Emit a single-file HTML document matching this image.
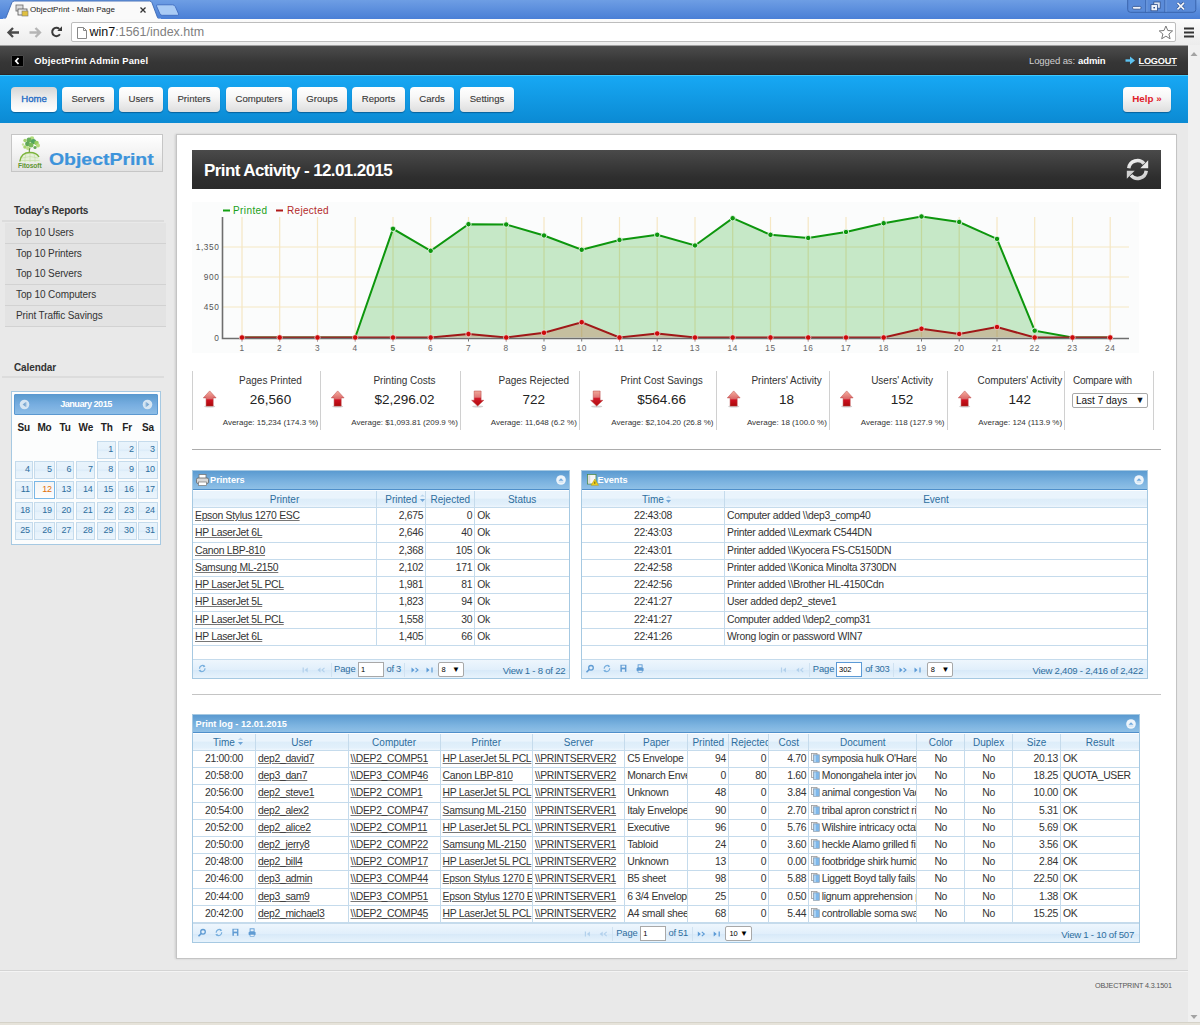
<!DOCTYPE html><html><head><meta charset="utf-8"><title>ObjectPrint - Main Page</title><style>
*{box-sizing:border-box;margin:0;padding:0}
html,body{width:1200px;height:1025px;overflow:hidden;background:#e9e9e9;font-family:"Liberation Sans",sans-serif;font-size:10px;color:#222}
.a{position:absolute;white-space:nowrap}
#tabbar{position:absolute;left:0;top:0;width:1200px;height:19px;background:linear-gradient(#6e9ee4,#4a7fd6)}
#toolbar{position:absolute;left:0;top:19px;width:1200px;height:27px;background:linear-gradient(#fbfbfb,#ececec);border-bottom:1px solid #a0a0a0}
#omni{position:absolute;left:71px;top:22px;width:1105px;height:20px;background:#fff;border:1px solid #bdbdbd;border-radius:2px}
#adminbar{position:absolute;left:0;top:46px;width:1188px;height:29px;background:linear-gradient(#4c4c4c,#363636 55%,#313131 95%,#2a1e1e)}
#navbar{position:absolute;left:0;top:75px;width:1188px;height:48px;background:linear-gradient(#17a8f4,#0b8ad3);border-top:1px solid #3ccaff}
.nb{position:absolute;top:11px;height:24.5px;border-radius:4px;background:linear-gradient(#ffffff 0%,#f7f7f7 40%,#dedede 100%);box-shadow:0 1px 1px rgba(0,40,80,.45);color:#444;font-size:9.6px;text-align:center;line-height:24.5px}
#scroll{position:absolute;left:1188px;top:45px;width:12px;height:977px;background:#f0f0f0}
#bottomstrip{position:absolute;left:0;top:1022px;width:1200px;height:3px;background:#e6e3da;border-top:1px solid #d5d2c8}
.side-h{position:absolute;left:14px;font-weight:bold;font-size:10px;color:#333}
.side-line{position:absolute;left:2px;width:162px;height:2px;background:#dcdcdc}
.mi{position:absolute;left:5px;width:161px;height:21px;background:#e3e3e3;border-bottom:1px solid #d2d2d2;padding-left:11px;line-height:20px;font-size:10px;color:#333;letter-spacing:-0.1px}
#main{position:absolute;left:176px;top:134px;width:1001px;height:825px;background:#fff;border:1px solid #c4c4c4;box-shadow:-1px 0 2px rgba(0,0,0,.12)}
#ttl{position:absolute;left:192px;top:150px;width:969px;height:39px;background:linear-gradient(#4a4a4a,#2e2e2e 70%,#2a2a2a)}
.st-sep{position:absolute;top:371px;width:1px;height:59px;background:#d0d0d0}
.st-t{position:absolute;top:375.3px;font-size:10px;color:#333;text-align:center}
.st-v{position:absolute;top:392.3px;font-size:13.5px;color:#222;text-align:center}
.st-avg{position:absolute;top:417.5px;font-size:8px;color:#333;text-align:center}
.hr{position:absolute;left:192px;width:969px;height:1px;background:#c4c4c4}
.pnl{position:absolute;border:1px solid #a6c9e2;background:#fff;overflow:hidden}
.pt{position:absolute;left:0;top:0;right:0;height:19px;background:linear-gradient(#5a9ad0,#7cb3e0 60%,#8fc0e6);border-bottom:1px solid #4f8fca;color:#fff;font-weight:bold;font-size:9.2px;line-height:19px}
.ph{position:absolute;left:0;right:0;height:18px;background:linear-gradient(#eaf4fc,#eaf4fc 45%,#ddedf9 50%,#e2f0fb 85%,#eef6fd);border-bottom:1px solid #c5dbec;border-top:1px solid #fdfeff}
.hc{position:absolute;top:0;height:17px;line-height:18px;text-align:center;color:#2e6e9e;font-size:10px;border-right:1px solid #c5dbec;overflow:hidden;white-space:nowrap}
.rw{position:absolute;left:0;right:0;border-bottom:1px solid #c5dbec}
.c{position:absolute;top:0;bottom:0;padding:0 2px;font-size:10.4px;letter-spacing:-0.3px;color:#333;border-right:1px solid #c5dbec;overflow:hidden;white-space:nowrap}
.u{text-decoration:underline;text-decoration-color:#777;text-underline-offset:0.8px}
.pg{position:absolute;left:0;right:0;background:linear-gradient(#eef6fd,#e1effb 50%,#d7e9f8 52%,#e9f4fd);border-top:1px solid #c5dbec;color:#2e6e9e;font-size:10px}
.cal-c{position:absolute;height:18px;border:1px solid #c5dbec;background:linear-gradient(#e9f4fc,#e5f1fb 45%,#d9eaf8 50%,#e6f2fb 60%,#eaf4fc);color:#2e6e9e;font-size:9px;text-align:right;padding-right:1.8px;line-height:14.6px;letter-spacing:-0.2px}
</style></head><body>
<div id="tabbar"></div>
<div id="toolbar"></div>
<svg class="a" style="left:0;top:0" width="200" height="22">
<path d="M4 19.5 Q5.5 19 6 17.5 L11.8 2.8 Q12.5 1 14.5 1 L149.5 1 Q151.3 1 152 2.8 L157.5 17.5 Q158 19 160 19.5 Z" fill="#fafafa" stroke="#3b68b3" stroke-width="0.9"/>
<rect x="3" y="18.6" width="158" height="3" fill="#f9f9f9"/>
<path d="M157.5 4.8 L172.5 4.8 Q174.5 4.8 175.3 6.6 L178.6 14 Q179 15.3 177.5 15.3 L162.3 15.3 Q160.6 15.3 160 14 L156.6 6.2 Q156.2 4.8 157.5 4.8Z" fill="#a9cbf5" stroke="#3866bb" stroke-width="0.8"/>
</svg>
<div id="omni"></div>
<svg class="a" style="left:15px;top:4px" width="14" height="13"><rect x="1" y="1" width="7" height="6" fill="#ddd" stroke="#666" stroke-width="0.8"/><rect x="3" y="5" width="9" height="6" fill="#eee" stroke="#555" stroke-width="0.8"/><rect x="7" y="7" width="6" height="5" fill="#e0c040" stroke="#777" stroke-width="0.6"/></svg>
<div class="a" style="left:30px;top:5.2px;font-size:8px;color:#222">ObjectPrint - Main Page</div>
<svg class="a" style="left:139px;top:6px" width="8" height="8"><path d="M1.5 1.5L6.5 6.5M6.5 1.5L1.5 6.5" stroke="#333" stroke-width="1.3"/></svg>
<svg class="a" style="left:5px;top:24px" width="66" height="18"><path d="M3.5 8.5 H14 M8 4 L3.5 8.5 L8 13" fill="none" stroke="#4a4a4a" stroke-width="2.3"/><path d="M24.5 8.5 H35 M30.5 4 L35 8.5 L30.5 13" fill="none" stroke="#b5b5b5" stroke-width="2.3"/><path d="M54.3 4.9 A4.2 4.2 0 1 0 54.9 10.3" fill="none" stroke="#3a3a3a" stroke-width="2"/><path d="M52.3 7 L57 7 L57 2.3 Z" fill="#3a3a3a"/></svg>
<svg class="a" style="left:75.5px;top:25.5px" width="12" height="14"><path d="M1.5 1.5 H7.5 L10.5 4.5 V12.5 H1.5 Z" fill="#fff" stroke="#888" stroke-width="1"/><path d="M7.5 1.5 V4.5 H10.5" fill="none" stroke="#888"/></svg>
<div class="a" style="left:89.5px;top:25.4px;font-size:12.5px;color:#111">win7<span style="color:#808080">:1561/index.htm</span></div>
<svg class="a" style="left:1158px;top:24.5px" width="16" height="15"><path d="M7.9 1 L9.8 5.5 L14.6 5.9 L10.9 9 L12.1 13.8 L7.9 11.2 L3.7 13.8 L4.9 9 L1.2 5.9 L6 5.5 Z" fill="#fff" stroke="#7a7a7a" stroke-width="1"/></svg>
<svg class="a" style="left:1183px;top:26px" width="12" height="13"><rect x="1" y="1.5" width="10" height="2" fill="#333"/><rect x="1" y="5.5" width="10" height="2" fill="#333"/><rect x="1" y="9.5" width="10" height="2" fill="#333"/></svg>
<svg class="a" style="left:1127px;top:0" width="73" height="14">
<path d="M0.7 0 V9.5 Q0.7 12.3 3.5 12.3 H66 Q68.8 12.3 68.8 9.5 V0" fill="#5a8bd9" stroke="#3660a8" stroke-width="0.9"/>
<path d="M18.8 0 V12.3 M37.9 0 V12.3" stroke="#3660a8" stroke-width="0.9"/>
<path d="M19.8 0 V12 M38.9 0 V12" stroke="#86aee8" stroke-width="0.6"/>
<rect x="5.5" y="6.4" width="8.6" height="2.8" rx="1.3" fill="#eef2fa" stroke="#2d4f8c" stroke-width="0.8"/>
<rect x="26.8" y="2" width="6.4" height="6.2" fill="#dfe6f3" stroke="#2d4f8c" stroke-width="0.8"/>
<rect x="24" y="4.6" width="6.4" height="6.2" fill="#eef2fa" stroke="#2d4f8c" stroke-width="0.8"/><rect x="26.4" y="7" width="1.6" height="1.4" fill="#2d4f8c"/>
<path d="M50.5 2.8 L57 9.4 M57 2.8 L50.5 9.4" stroke="#2d4f8c" stroke-width="3"/>
<path d="M50.5 2.8 L57 9.4 M57 2.8 L50.5 9.4" stroke="#f4f6fb" stroke-width="1.7"/>
</svg>
<div id="adminbar"></div>
<div class="a" style="left:11px;top:55px;width:13px;height:12px;background:#000;border:1px solid #4a4a4a;border-radius:1px"></div>
<svg class="a" style="left:11px;top:55px" width="13" height="12"><path d="M7.5 3 L4.8 6 L7.5 9" fill="none" stroke="#fff" stroke-width="1.8"/></svg>
<div class="a" style="left:34.3px;top:55.3px;color:#fff;font-weight:bold;font-size:9.4px;letter-spacing:0.19px">ObjectPrint Admin Panel</div>
<div class="a" style="left:1029px;top:55.2px;color:#d0d0d0;font-size:9.5px;letter-spacing:-0.1px">Logged as:<b style="color:#fff;letter-spacing:-0.1px;margin-left:3px">admin</b></div>
<svg class="a" style="left:1125px;top:56px" width="11" height="9"><path d="M0.5 4.5 H6.5" stroke="#5cc3f2" stroke-width="2.4"/><path d="M5 0.5 L10 4.5 L5 8.5Z" fill="#5cc3f2"/></svg>
<div class="a" style="left:1138.5px;top:55.8px;color:#fff;font-size:9.2px;font-weight:bold;letter-spacing:-0.2px">LOGOUT</div><div class="a" style="left:1139px;top:64.5px;width:38px;height:1.5px;background:#aaa"></div>
<div id="navbar">
<div class="nb" style="left:11px;width:46px;color:#1a68c4;background:linear-gradient(#d6d6d6,#f2f2f2 55%,#ffffff);font-size:9.6px;-webkit-text-stroke:0.3px #1a68c4;">Home</div>
<div class="nb" style="left:62px;width:52px;color:#383838;-webkit-text-stroke:0.1px #383838;">Servers</div>
<div class="nb" style="left:119px;width:44px;color:#383838;-webkit-text-stroke:0.1px #383838;">Users</div>
<div class="nb" style="left:168px;width:52px;color:#383838;-webkit-text-stroke:0.1px #383838;">Printers</div>
<div class="nb" style="left:226px;width:66px;color:#383838;-webkit-text-stroke:0.1px #383838;">Computers</div>
<div class="nb" style="left:297px;width:50px;color:#383838;-webkit-text-stroke:0.1px #383838;">Groups</div>
<div class="nb" style="left:352px;width:53px;color:#383838;-webkit-text-stroke:0.1px #383838;">Reports</div>
<div class="nb" style="left:410px;width:44px;color:#383838;-webkit-text-stroke:0.1px #383838;">Cards</div>
<div class="nb" style="left:460px;width:54px;color:#383838;-webkit-text-stroke:0.1px #383838;">Settings</div>
<div class="nb" style="left:1123px;width:48px;color:#e0202a;font-weight:bold;font-size:9.8px">Help &raquo;</div>
</div>
<div id="scroll"></div>
<svg class="a" style="left:1188px;top:45px" width="12" height="980"><path d="M2.5 11 L6 7 L9.5 11Z" fill="#a3a3a3"/><path d="M2.5 970 L6 974 L9.5 970Z" fill="#a3a3a3"/></svg>
<div id="bottomstrip"></div>
<div class="a" style="left:11px;top:134px;width:152px;height:38px;border:1px solid #c6c6c6;background:linear-gradient(#ffffff,#f3f3f3 50%,#e2e2e2)"></div>
<svg class="a" style="left:16px;top:135px" width="30" height="36">
<g opacity="0.9">
<circle cx="16" cy="3.5" r="2.2" fill="#a8d870"/><circle cx="13" cy="5" r="2.5" fill="#5aa848"/><circle cx="17.5" cy="6.5" r="2.6" fill="#3f9a50"/><circle cx="9" cy="5.5" r="1.7" fill="#9ccc60"/>
<circle cx="20.5" cy="8" r="2.3" fill="#8cc850"/><circle cx="22" cy="10.5" r="2" fill="#b0d870"/><circle cx="11.5" cy="9" r="2.4" fill="#4f9e48"/><circle cx="15" cy="10" r="2.5" fill="#6cb448"/>
<circle cx="9" cy="12" r="1.8" fill="#a0d060"/><circle cx="12" cy="13.2" r="1.9" fill="#b8dc80"/><circle cx="19" cy="12.5" r="1.6" fill="#58a048"/><circle cx="7" cy="9.5" r="1.2" fill="#c0e090"/>
</g>
<path d="M14 13 Q13 15 13.3 17.5" stroke="#6a8a40" stroke-width="1.1" fill="none"/>
<path d="M3.5 27 Q5 17.5 14 17.5 Q23 17.5 24.5 27 Z" fill="#e6f0da"/>
<path d="M6 23 Q14 20 22 23 M5 25.5 H23.5 M10 19 Q8.5 23 9 27 M14 18 V27 M18 19 Q19.5 23 19 27" stroke="#c4dca8" stroke-width="0.7" fill="none"/>
<path d="M3.8 26.5 Q5 17.5 14 17.5 Q20.5 17.5 23 22" stroke="#7cb43c" stroke-width="1.5" fill="none"/>
<text x="1.9" y="33.2" font-family="Liberation Sans" font-size="6.7" font-weight="bold" fill="#5f9630" letter-spacing="-0.1">Fitosoft</text>
</svg>
<div class="a" style="left:48.5px;top:149.6px;font-size:16.2px;font-weight:bold;color:#3d94db;transform:scaleX(1.2);transform-origin:0 0;-webkit-text-stroke:0.2px #3d94db">ObjectPrint</div>
<div class="side-h" style="top:204.5px;letter-spacing:-0.2px">Today&#39;s Reports</div>
<div class="side-line" style="top:219.5px"></div>
<div class="mi" style="top:222.60px">Top 10 Users</div>
<div class="mi" style="top:243.53px">Top 10 Printers</div>
<div class="mi" style="top:264.46px">Top 10 Servers</div>
<div class="mi" style="top:285.39px">Top 10 Computers</div>
<div class="mi" style="top:306.32px">Print Traffic Savings</div>
<div class="side-h" style="top:362px;letter-spacing:-0.1px">Calendar</div>
<div class="side-line" style="top:376px"></div>
<div class="a" style="left:11px;top:391px;width:150px;height:154px;border:1px solid #a6c9e2;background:#fcfdfd"></div>
<div class="a" style="left:14px;top:394px;width:144px;height:21px;border:1px solid #5a98d0;border-radius:1px;background:linear-gradient(#5c9ccf,#77ade0 50%,#8cbde6)"></div>
<div class="a" style="left:14px;top:394px;width:144px;height:21px;line-height:20px;text-align:center;color:#fff;font-weight:bold;font-size:9.2px;letter-spacing:-0.55px">January 2015</div>
<svg class="a" style="left:19px;top:399px" width="12" height="12"><circle cx="5.5" cy="5.5" r="4.8" fill="#d6e6f3"/><path d="M6.8 3 L3.6 5.5 L6.8 8 Z" fill="#7ba8d2"/><path d="M7.6 3.2 V7.8" stroke="#a9c8e4" stroke-width="0.8"/></svg>
<svg class="a" style="left:142px;top:399px" width="12" height="12"><circle cx="5.5" cy="5.5" r="4.8" fill="#d6e6f3"/><path d="M4.2 3 L7.4 5.5 L4.2 8 Z" fill="#7ba8d2"/><path d="M3.4 3.2 V7.8" stroke="#a9c8e4" stroke-width="0.8"/></svg>
<div class="a" style="left:11.850000000000001px;width:24px;top:421.5px;text-align:center;font-weight:bold;font-size:10px;color:#222;letter-spacing:-0.1px">Su</div>
<div class="a" style="left:32.5px;width:24px;top:421.5px;text-align:center;font-weight:bold;font-size:10px;color:#222;letter-spacing:-0.1px">Mo</div>
<div class="a" style="left:53.099999999999994px;width:24px;top:421.5px;text-align:center;font-weight:bold;font-size:10px;color:#222;letter-spacing:-0.1px">Tu</div>
<div class="a" style="left:73.85px;width:24px;top:421.5px;text-align:center;font-weight:bold;font-size:10px;color:#222;letter-spacing:-0.1px">We</div>
<div class="a" style="left:94.65px;width:24px;top:421.5px;text-align:center;font-weight:bold;font-size:10px;color:#222;letter-spacing:-0.1px">Th</div>
<div class="a" style="left:115.25px;width:24px;top:421.5px;text-align:center;font-weight:bold;font-size:10px;color:#222;letter-spacing:-0.1px">Fr</div>
<div class="a" style="left:136.0px;width:24px;top:421.5px;text-align:center;font-weight:bold;font-size:10px;color:#222;letter-spacing:-0.1px">Sa</div>
<div class="cal-c" style="left:97.4px;width:18.5px;top:441px;">1</div>
<div class="cal-c" style="left:118px;width:18.5px;top:441px;">2</div>
<div class="cal-c" style="left:138.3px;width:19.399999999999977px;top:441px;">3</div>
<div class="cal-c" style="left:15.1px;width:17.5px;top:461.2px;">4</div>
<div class="cal-c" style="left:34.3px;width:20.400000000000006px;top:461.2px;">5</div>
<div class="cal-c" style="left:56.2px;width:17.799999999999997px;top:461.2px;">6</div>
<div class="cal-c" style="left:76.2px;width:19.299999999999997px;top:461.2px;">7</div>
<div class="cal-c" style="left:97.4px;width:18.5px;top:461.2px;">8</div>
<div class="cal-c" style="left:118px;width:18.5px;top:461.2px;">9</div>
<div class="cal-c" style="left:138.3px;width:19.399999999999977px;top:461.2px;">10</div>
<div class="cal-c" style="left:15.1px;width:17.5px;top:481.2px;">11</div>
<div class="cal-c" style="left:34.3px;width:20.400000000000006px;top:481.2px;border-color:#79b7e7;background:linear-gradient(#f4f4f4,#fdfdfd);color:#e17009;">12</div>
<div class="cal-c" style="left:56.2px;width:17.799999999999997px;top:481.2px;">13</div>
<div class="cal-c" style="left:76.2px;width:19.299999999999997px;top:481.2px;">14</div>
<div class="cal-c" style="left:97.4px;width:18.5px;top:481.2px;">15</div>
<div class="cal-c" style="left:118px;width:18.5px;top:481.2px;">16</div>
<div class="cal-c" style="left:138.3px;width:19.399999999999977px;top:481.2px;">17</div>
<div class="cal-c" style="left:15.1px;width:17.5px;top:501.6px;">18</div>
<div class="cal-c" style="left:34.3px;width:20.400000000000006px;top:501.6px;">19</div>
<div class="cal-c" style="left:56.2px;width:17.799999999999997px;top:501.6px;">20</div>
<div class="cal-c" style="left:76.2px;width:19.299999999999997px;top:501.6px;">21</div>
<div class="cal-c" style="left:97.4px;width:18.5px;top:501.6px;">22</div>
<div class="cal-c" style="left:118px;width:18.5px;top:501.6px;">23</div>
<div class="cal-c" style="left:138.3px;width:19.399999999999977px;top:501.6px;">24</div>
<div class="cal-c" style="left:15.1px;width:17.5px;top:521.8px;">25</div>
<div class="cal-c" style="left:34.3px;width:20.400000000000006px;top:521.8px;">26</div>
<div class="cal-c" style="left:56.2px;width:17.799999999999997px;top:521.8px;">27</div>
<div class="cal-c" style="left:76.2px;width:19.299999999999997px;top:521.8px;">28</div>
<div class="cal-c" style="left:97.4px;width:18.5px;top:521.8px;">29</div>
<div class="cal-c" style="left:118px;width:18.5px;top:521.8px;">30</div>
<div class="cal-c" style="left:138.3px;width:19.399999999999977px;top:521.8px;">31</div>
<div id="main"></div>
<div id="ttl"></div>
<div class="a" style="left:204px;top:160.5px;font-size:17px;font-weight:bold;color:#fff;letter-spacing:-0.6px">Print Activity - 12.01.2015</div>
<svg class="a" style="left:1120px;top:150px" width="36" height="38"><defs><linearGradient id="rg" x1="0" y1="0" x2="1" y2="1"><stop offset="0" stop-color="#f4f4f4"/><stop offset="1" stop-color="#c8c8c8"/></linearGradient></defs><g fill="none" stroke="url(#rg)" stroke-width="3.5"><path d="M8.75 18.3 A8.75 8.75 0 0 1 24 13.6"/><path d="M26.25 20.7 A8.75 8.75 0 0 1 11 25.4"/></g><path d="M20.3 18.2 L28.2 18.2 L28.2 10.3 Z" fill="#e8e8e8"/><path d="M14.7 20.8 L6.8 20.8 L6.8 28.7 Z" fill="#d0d0d0"/></svg>
<svg class="a" style="left:0;top:0" width="1200" height="400">
<rect x="192" y="202" width="947" height="151" fill="#fbfcfc"/>
<path d="M242.0 217 V337 M279.7 217 V337 M317.5 217 V337 M355.2 217 V337 M393.0 217 V337 M430.7 217 V337 M468.5 217 V337 M506.2 217 V337 M544.0 217 V337 M581.7 217 V337 M619.5 217 V337 M657.2 217 V337 M695.0 217 V337 M732.7 217 V337 M770.5 217 V337 M808.2 217 V337 M846.0 217 V337 M883.7 217 V337 M921.5 217 V337 M959.2 217 V337 M997.0 217 V337 M1034.7 217 V337 M1072.5 217 V337 M1110.2 217 V337 M223 247 H1129 M223 277 H1129 M223 307 H1129" stroke="#f6e7c3" stroke-width="1.2" fill="none"/>
<polygon points="242.0,337.5 242.0,337.5 279.7,337.5 317.5,337.5 355.2,337.5 393.0,228.8 430.7,250.8 468.5,224.2 506.2,224.5 544.0,235.5 581.7,249.8 619.5,240.0 657.2,234.8 695.0,245.5 732.7,218.2 770.5,234.8 808.2,238.0 846.0,232.0 883.7,223.2 921.5,216.5 959.2,222.0 997.0,238.9 1034.7,330.7 1072.5,337.5 1110.2,337.5 1110.2,337.5" fill="rgba(40,170,40,0.25)"/>
<polygon points="242.0,337.5 242.0,337.5 279.7,337.5 317.5,337.5 355.2,337.5 393.0,337.5 430.7,337.5 468.5,334.0 506.2,337.5 544.0,332.8 581.7,322.2 619.5,337.5 657.2,333.5 695.0,337.5 732.7,337.5 770.5,337.5 808.2,337.5 846.0,337.5 883.7,337.5 921.5,328.8 959.2,334.0 997.0,327.0 1034.7,337.5 1072.5,337.5 1110.2,337.5 1110.2,337.5" fill="rgba(194,116,86,0.35)"/>
<polyline points="242.0,337.5 279.7,337.5 317.5,337.5 355.2,337.5 393.0,228.8 430.7,250.8 468.5,224.2 506.2,224.5 544.0,235.5 581.7,249.8 619.5,240.0 657.2,234.8 695.0,245.5 732.7,218.2 770.5,234.8 808.2,238.0 846.0,232.0 883.7,223.2 921.5,216.5 959.2,222.0 997.0,238.9 1034.7,330.7 1072.5,337.5 1110.2,337.5" fill="none" stroke="#0d960d" stroke-width="2"/>
<polyline points="242.0,337.5 279.7,337.5 317.5,337.5 355.2,337.5 393.0,337.5 430.7,337.5 468.5,334.0 506.2,337.5 544.0,332.8 581.7,322.2 619.5,337.5 657.2,333.5 695.0,337.5 732.7,337.5 770.5,337.5 808.2,337.5 846.0,337.5 883.7,337.5 921.5,328.8 959.2,334.0 997.0,327.0 1034.7,337.5 1072.5,337.5 1110.2,337.5" fill="none" stroke="#a01818" stroke-width="2"/>
<path d="M222.5 217 V338.5 H1129" stroke="#6e6e6e" stroke-width="1.6" fill="none"/>
<path d="M242.0 338 V341.5 M279.7 338 V341.5 M317.5 338 V341.5 M355.2 338 V341.5 M393.0 338 V341.5 M430.7 338 V341.5 M468.5 338 V341.5 M506.2 338 V341.5 M544.0 338 V341.5 M581.7 338 V341.5 M619.5 338 V341.5 M657.2 338 V341.5 M695.0 338 V341.5 M732.7 338 V341.5 M770.5 338 V341.5 M808.2 338 V341.5 M846.0 338 V341.5 M883.7 338 V341.5 M921.5 338 V341.5 M959.2 338 V341.5 M997.0 338 V341.5 M1034.7 338 V341.5 M1072.5 338 V341.5 M1110.2 338 V341.5" stroke="#777" stroke-width="1"/>
<circle cx="393.0" cy="228.8" r="2.7" fill="#0d960d" stroke="#fff" stroke-width="0.8"/>
<circle cx="430.7" cy="250.8" r="2.7" fill="#0d960d" stroke="#fff" stroke-width="0.8"/>
<circle cx="468.5" cy="224.2" r="2.7" fill="#0d960d" stroke="#fff" stroke-width="0.8"/>
<circle cx="506.2" cy="224.5" r="2.7" fill="#0d960d" stroke="#fff" stroke-width="0.8"/>
<circle cx="544.0" cy="235.5" r="2.7" fill="#0d960d" stroke="#fff" stroke-width="0.8"/>
<circle cx="581.7" cy="249.8" r="2.7" fill="#0d960d" stroke="#fff" stroke-width="0.8"/>
<circle cx="619.5" cy="240.0" r="2.7" fill="#0d960d" stroke="#fff" stroke-width="0.8"/>
<circle cx="657.2" cy="234.8" r="2.7" fill="#0d960d" stroke="#fff" stroke-width="0.8"/>
<circle cx="695.0" cy="245.5" r="2.7" fill="#0d960d" stroke="#fff" stroke-width="0.8"/>
<circle cx="732.7" cy="218.2" r="2.7" fill="#0d960d" stroke="#fff" stroke-width="0.8"/>
<circle cx="770.5" cy="234.8" r="2.7" fill="#0d960d" stroke="#fff" stroke-width="0.8"/>
<circle cx="808.2" cy="238.0" r="2.7" fill="#0d960d" stroke="#fff" stroke-width="0.8"/>
<circle cx="846.0" cy="232.0" r="2.7" fill="#0d960d" stroke="#fff" stroke-width="0.8"/>
<circle cx="883.7" cy="223.2" r="2.7" fill="#0d960d" stroke="#fff" stroke-width="0.8"/>
<circle cx="921.5" cy="216.5" r="2.7" fill="#0d960d" stroke="#fff" stroke-width="0.8"/>
<circle cx="959.2" cy="222.0" r="2.7" fill="#0d960d" stroke="#fff" stroke-width="0.8"/>
<circle cx="997.0" cy="238.9" r="2.7" fill="#0d960d" stroke="#fff" stroke-width="0.8"/>
<circle cx="1034.7" cy="330.7" r="2.7" fill="#0d960d" stroke="#fff" stroke-width="0.8"/>
<circle cx="1034.7" cy="330.7" r="2.7" fill="#0d960d" stroke="#fff" stroke-width="0.8"/>
<circle cx="242.0" cy="337.5" r="2.7" fill="#cc0a0a" stroke="#fff" stroke-width="0.6"/>
<circle cx="279.7" cy="337.5" r="2.7" fill="#cc0a0a" stroke="#fff" stroke-width="0.6"/>
<circle cx="317.5" cy="337.5" r="2.7" fill="#cc0a0a" stroke="#fff" stroke-width="0.6"/>
<circle cx="355.2" cy="337.5" r="2.7" fill="#cc0a0a" stroke="#fff" stroke-width="0.6"/>
<circle cx="393.0" cy="337.5" r="2.7" fill="#cc0a0a" stroke="#fff" stroke-width="0.6"/>
<circle cx="430.7" cy="337.5" r="2.7" fill="#cc0a0a" stroke="#fff" stroke-width="0.6"/>
<circle cx="468.5" cy="334.0" r="2.7" fill="#cc0a0a" stroke="#fff" stroke-width="0.6"/>
<circle cx="506.2" cy="337.5" r="2.7" fill="#cc0a0a" stroke="#fff" stroke-width="0.6"/>
<circle cx="544.0" cy="332.8" r="2.7" fill="#cc0a0a" stroke="#fff" stroke-width="0.6"/>
<circle cx="581.7" cy="322.2" r="2.7" fill="#cc0a0a" stroke="#fff" stroke-width="0.6"/>
<circle cx="619.5" cy="337.5" r="2.7" fill="#cc0a0a" stroke="#fff" stroke-width="0.6"/>
<circle cx="657.2" cy="333.5" r="2.7" fill="#cc0a0a" stroke="#fff" stroke-width="0.6"/>
<circle cx="695.0" cy="337.5" r="2.7" fill="#cc0a0a" stroke="#fff" stroke-width="0.6"/>
<circle cx="732.7" cy="337.5" r="2.7" fill="#cc0a0a" stroke="#fff" stroke-width="0.6"/>
<circle cx="770.5" cy="337.5" r="2.7" fill="#cc0a0a" stroke="#fff" stroke-width="0.6"/>
<circle cx="808.2" cy="337.5" r="2.7" fill="#cc0a0a" stroke="#fff" stroke-width="0.6"/>
<circle cx="846.0" cy="337.5" r="2.7" fill="#cc0a0a" stroke="#fff" stroke-width="0.6"/>
<circle cx="883.7" cy="337.5" r="2.7" fill="#cc0a0a" stroke="#fff" stroke-width="0.6"/>
<circle cx="921.5" cy="328.8" r="2.7" fill="#cc0a0a" stroke="#fff" stroke-width="0.6"/>
<circle cx="959.2" cy="334.0" r="2.7" fill="#cc0a0a" stroke="#fff" stroke-width="0.6"/>
<circle cx="997.0" cy="327.0" r="2.7" fill="#cc0a0a" stroke="#fff" stroke-width="0.6"/>
<circle cx="1034.7" cy="337.5" r="2.7" fill="#cc0a0a" stroke="#fff" stroke-width="0.6"/>
<circle cx="1072.5" cy="337.5" r="2.7" fill="#cc0a0a" stroke="#fff" stroke-width="0.6"/>
<circle cx="1110.2" cy="337.5" r="2.7" fill="#cc0a0a" stroke="#fff" stroke-width="0.6"/>
<text x="242.0" y="351" font-family="Liberation Sans" font-size="8.3" fill="#666" text-anchor="middle" letter-spacing="0.6">1</text>
<text x="279.7" y="351" font-family="Liberation Sans" font-size="8.3" fill="#666" text-anchor="middle" letter-spacing="0.6">2</text>
<text x="317.5" y="351" font-family="Liberation Sans" font-size="8.3" fill="#666" text-anchor="middle" letter-spacing="0.6">3</text>
<text x="355.2" y="351" font-family="Liberation Sans" font-size="8.3" fill="#666" text-anchor="middle" letter-spacing="0.6">4</text>
<text x="393.0" y="351" font-family="Liberation Sans" font-size="8.3" fill="#666" text-anchor="middle" letter-spacing="0.6">5</text>
<text x="430.7" y="351" font-family="Liberation Sans" font-size="8.3" fill="#666" text-anchor="middle" letter-spacing="0.6">6</text>
<text x="468.5" y="351" font-family="Liberation Sans" font-size="8.3" fill="#666" text-anchor="middle" letter-spacing="0.6">7</text>
<text x="506.2" y="351" font-family="Liberation Sans" font-size="8.3" fill="#666" text-anchor="middle" letter-spacing="0.6">8</text>
<text x="544.0" y="351" font-family="Liberation Sans" font-size="8.3" fill="#666" text-anchor="middle" letter-spacing="0.6">9</text>
<text x="581.7" y="351" font-family="Liberation Sans" font-size="8.3" fill="#666" text-anchor="middle" letter-spacing="0.6">10</text>
<text x="619.5" y="351" font-family="Liberation Sans" font-size="8.3" fill="#666" text-anchor="middle" letter-spacing="0.6">11</text>
<text x="657.2" y="351" font-family="Liberation Sans" font-size="8.3" fill="#666" text-anchor="middle" letter-spacing="0.6">12</text>
<text x="695.0" y="351" font-family="Liberation Sans" font-size="8.3" fill="#666" text-anchor="middle" letter-spacing="0.6">13</text>
<text x="732.7" y="351" font-family="Liberation Sans" font-size="8.3" fill="#666" text-anchor="middle" letter-spacing="0.6">14</text>
<text x="770.5" y="351" font-family="Liberation Sans" font-size="8.3" fill="#666" text-anchor="middle" letter-spacing="0.6">15</text>
<text x="808.2" y="351" font-family="Liberation Sans" font-size="8.3" fill="#666" text-anchor="middle" letter-spacing="0.6">16</text>
<text x="846.0" y="351" font-family="Liberation Sans" font-size="8.3" fill="#666" text-anchor="middle" letter-spacing="0.6">17</text>
<text x="883.7" y="351" font-family="Liberation Sans" font-size="8.3" fill="#666" text-anchor="middle" letter-spacing="0.6">18</text>
<text x="921.5" y="351" font-family="Liberation Sans" font-size="8.3" fill="#666" text-anchor="middle" letter-spacing="0.6">19</text>
<text x="959.2" y="351" font-family="Liberation Sans" font-size="8.3" fill="#666" text-anchor="middle" letter-spacing="0.6">20</text>
<text x="997.0" y="351" font-family="Liberation Sans" font-size="8.3" fill="#666" text-anchor="middle" letter-spacing="0.6">21</text>
<text x="1034.7" y="351" font-family="Liberation Sans" font-size="8.3" fill="#666" text-anchor="middle" letter-spacing="0.6">22</text>
<text x="1072.5" y="351" font-family="Liberation Sans" font-size="8.3" fill="#666" text-anchor="middle" letter-spacing="0.6">23</text>
<text x="1110.2" y="351" font-family="Liberation Sans" font-size="8.3" fill="#666" text-anchor="middle" letter-spacing="0.6">24</text>
<text x="219.5" y="250" font-family="Liberation Sans" font-size="8.3" fill="#555" text-anchor="end" letter-spacing="0.6">1,350</text>
<text x="219.5" y="280" font-family="Liberation Sans" font-size="8.3" fill="#555" text-anchor="end" letter-spacing="0.6">900</text>
<text x="219.5" y="310" font-family="Liberation Sans" font-size="8.3" fill="#555" text-anchor="end" letter-spacing="0.6">450</text>
<text x="219.5" y="341" font-family="Liberation Sans" font-size="8.3" fill="#555" text-anchor="end" letter-spacing="0.6">0</text>
<path d="M223 210.5 H230" stroke="#12a012" stroke-width="2"/><text x="233" y="213.5" font-family="Liberation Sans" font-size="10" fill="#19a019" letter-spacing="0.4">Printed</text>
<path d="M276 210.5 H283" stroke="#b01a1a" stroke-width="2"/><text x="287" y="213.5" font-family="Liberation Sans" font-size="10" fill="#b32a2a" letter-spacing="0.3">Rejected</text>
</svg>
<div class="st-sep" style="left:192px"></div>
<div class="st-sep" style="left:320px"></div>
<div class="st-sep" style="left:460px"></div>
<div class="st-sep" style="left:579px"></div>
<div class="st-sep" style="left:716px"></div>
<div class="st-sep" style="left:829px"></div>
<div class="st-sep" style="left:947px"></div>
<div class="st-sep" style="left:1064px"></div>
<div class="st-sep" style="left:1153px"></div>
<svg class="a" style="left:202.8px;top:390px" width="14" height="18"><defs><linearGradient id="gu0" x1="0" y1="0" x2="0" y2="1"><stop offset="0" stop-color="#f6b0a0"/><stop offset="0.5" stop-color="#dc6a6a"/><stop offset="0.6" stop-color="#cf1020"/><stop offset="1" stop-color="#a80a0a"/></linearGradient></defs><ellipse cx="6.7" cy="16.4" rx="5.5" ry="1" fill="rgba(0,0,0,.18)"/><path d="M6.7 0.9 L13.1 7.9 L10.2 7.9 L10.2 16.1 L3.1 16.1 L3.1 7.9 L0.3 7.9 Z" fill="url(#gu0)" stroke="#b84040" stroke-width="0.5"/></svg>
<div class="st-t" style="left:210.5px;width:120px">Pages Printed</div>
<div class="st-v" style="left:210.5px;width:120px">26,560</div>
<div class="st-avg" style="left:188.2px;width:130px;text-align:right">Average: 15,234 (174.3 %)</div>
<svg class="a" style="left:331.2px;top:390px" width="14" height="18"><defs><linearGradient id="gu1" x1="0" y1="0" x2="0" y2="1"><stop offset="0" stop-color="#f6b0a0"/><stop offset="0.5" stop-color="#dc6a6a"/><stop offset="0.6" stop-color="#cf1020"/><stop offset="1" stop-color="#a80a0a"/></linearGradient></defs><ellipse cx="6.7" cy="16.4" rx="5.5" ry="1" fill="rgba(0,0,0,.18)"/><path d="M6.7 0.9 L13.1 7.9 L10.2 7.9 L10.2 16.1 L3.1 16.1 L3.1 7.9 L0.3 7.9 Z" fill="url(#gu1)" stroke="#b84040" stroke-width="0.5"/></svg>
<div class="st-t" style="left:344.5px;width:120px">Printing Costs</div>
<div class="st-v" style="left:344.5px;width:120px">$2,296.02</div>
<div class="st-avg" style="left:327.8px;width:130px;text-align:right">Average: $1,093.81 (209.9 %)</div>
<svg class="a" style="left:470.8px;top:390px" width="14" height="18"><defs><linearGradient id="gd2" x1="0" y1="0" x2="0" y2="1"><stop offset="0" stop-color="#f0a898"/><stop offset="0.4" stop-color="#e07878"/><stop offset="0.5" stop-color="#d01828"/><stop offset="1" stop-color="#b00c0c"/></linearGradient></defs><ellipse cx="6.7" cy="16.4" rx="5.5" ry="1" fill="rgba(0,0,0,.18)"/><path d="M3.2 1 L10.1 1 L10.1 10.3 L12.8 10.3 L6.7 16.1 L0.6 10.3 L3.2 10.3 Z" fill="url(#gd2)" stroke="#b84040" stroke-width="0.5"/></svg>
<div class="st-t" style="left:473.8px;width:120px">Pages Rejected</div>
<div class="st-v" style="left:473.8px;width:120px">722</div>
<div class="st-avg" style="left:446.8px;width:130px;text-align:right">Average: 11,648 (6.2 %)</div>
<svg class="a" style="left:589.8px;top:390px" width="14" height="18"><defs><linearGradient id="gd3" x1="0" y1="0" x2="0" y2="1"><stop offset="0" stop-color="#f0a898"/><stop offset="0.4" stop-color="#e07878"/><stop offset="0.5" stop-color="#d01828"/><stop offset="1" stop-color="#b00c0c"/></linearGradient></defs><ellipse cx="6.7" cy="16.4" rx="5.5" ry="1" fill="rgba(0,0,0,.18)"/><path d="M3.2 1 L10.1 1 L10.1 10.3 L12.8 10.3 L6.7 16.1 L0.6 10.3 L3.2 10.3 Z" fill="url(#gd3)" stroke="#b84040" stroke-width="0.5"/></svg>
<div class="st-t" style="left:601.6px;width:120px">Print Cost Savings</div>
<div class="st-v" style="left:601.6px;width:120px">$564.66</div>
<div class="st-avg" style="left:583.5px;width:130px;text-align:right">Average: $2,104.20 (26.8 %)</div>
<svg class="a" style="left:726.5px;top:390px" width="14" height="18"><defs><linearGradient id="gu4" x1="0" y1="0" x2="0" y2="1"><stop offset="0" stop-color="#f6b0a0"/><stop offset="0.5" stop-color="#dc6a6a"/><stop offset="0.6" stop-color="#cf1020"/><stop offset="1" stop-color="#a80a0a"/></linearGradient></defs><ellipse cx="6.7" cy="16.4" rx="5.5" ry="1" fill="rgba(0,0,0,.18)"/><path d="M6.7 0.9 L13.1 7.9 L10.2 7.9 L10.2 16.1 L3.1 16.1 L3.1 7.9 L0.3 7.9 Z" fill="url(#gu4)" stroke="#b84040" stroke-width="0.5"/></svg>
<div class="st-t" style="left:726.6px;width:120px">Printers&#39; Activity</div>
<div class="st-v" style="left:726.6px;width:120px">18</div>
<div class="st-avg" style="left:696.8px;width:130px;text-align:right">Average: 18 (100.0 %)</div>
<svg class="a" style="left:839.8px;top:390px" width="14" height="18"><defs><linearGradient id="gu5" x1="0" y1="0" x2="0" y2="1"><stop offset="0" stop-color="#f6b0a0"/><stop offset="0.5" stop-color="#dc6a6a"/><stop offset="0.6" stop-color="#cf1020"/><stop offset="1" stop-color="#a80a0a"/></linearGradient></defs><ellipse cx="6.7" cy="16.4" rx="5.5" ry="1" fill="rgba(0,0,0,.18)"/><path d="M6.7 0.9 L13.1 7.9 L10.2 7.9 L10.2 16.1 L3.1 16.1 L3.1 7.9 L0.3 7.9 Z" fill="url(#gu5)" stroke="#b84040" stroke-width="0.5"/></svg>
<div class="st-t" style="left:842.1px;width:120px">Users&#39; Activity</div>
<div class="st-v" style="left:842.1px;width:120px">152</div>
<div class="st-avg" style="left:814.5px;width:130px;text-align:right">Average: 118 (127.9 %)</div>
<svg class="a" style="left:957.5px;top:390px" width="14" height="18"><defs><linearGradient id="gu6" x1="0" y1="0" x2="0" y2="1"><stop offset="0" stop-color="#f6b0a0"/><stop offset="0.5" stop-color="#dc6a6a"/><stop offset="0.6" stop-color="#cf1020"/><stop offset="1" stop-color="#a80a0a"/></linearGradient></defs><ellipse cx="6.7" cy="16.4" rx="5.5" ry="1" fill="rgba(0,0,0,.18)"/><path d="M6.7 0.9 L13.1 7.9 L10.2 7.9 L10.2 16.1 L3.1 16.1 L3.1 7.9 L0.3 7.9 Z" fill="url(#gu6)" stroke="#b84040" stroke-width="0.5"/></svg>
<div class="st-t" style="left:959.8px;width:120px">Computers&#39; Activity</div>
<div class="st-v" style="left:959.8px;width:120px">142</div>
<div class="st-avg" style="left:932.1px;width:130px;text-align:right">Average: 124 (113.9 %)</div>
<div class="st-t" style="left:1073px;text-align:left;letter-spacing:-0.25px">Compare with</div>
<div class="a" style="left:1072px;top:393px;width:76px;height:15px;border:1px solid #a9a9a9;border-radius:2px;background:#fff;font-size:10px;line-height:13px;padding-left:3px;color:#111">Last 7 days<span style="position:absolute;right:2.5px;top:0;font-size:9px">&#9660;</span></div>
<div class="hr" style="top:449px;background:#acacac"></div>
<div class="pnl" style="left:192px;top:470px;width:378px;height:209px">
<div class="pt" style="padding-left:17px;height:19px;line-height:19px">Printers</div>
<svg class="a" style="right:2px;top:4px" width="11" height="11"><circle cx="5" cy="5" r="4.8" fill="#eef5fb"/><path d="M2.5 5.8 L5 3.2 L7.5 5.8 Z" fill="#6fa8dc"/><path d="M2.6 7 H7.4" stroke="#b8d4ec" stroke-width="0.8"/></svg>
<svg class="a" style="left:3px;top:3px" width="13" height="12"><rect x="3" y="0.5" width="7" height="4" fill="#fff" stroke="#777" stroke-width="0.8"/><rect x="0.5" y="4" width="12" height="5.5" rx="1.5" fill="#d8d8d8" stroke="#666" stroke-width="0.8"/><rect x="2.5" y="8" width="8" height="3.5" fill="#fff" stroke="#777" stroke-width="0.7"/></svg>
<div class="ph" style="top:19px">
<div class="hc" style="left:0px;width:184px;">Printer</div>
<div class="hc" style="left:184px;width:49.30000000000001px;">Printed</div>
<div class="hc" style="left:233.3px;width:49.0px;">Rejected</div>
<div class="hc" style="left:282.3px;width:94.69999999999999px;">Status</div>
</div>
<div class="rw" style="top:37.00px;height:17.27px">
<div class="c" style="left:0px;width:184px;line-height:16.27px;text-align:left;"><span class="u">Epson Stylus 1270 ESC</span></div>
<div class="c" style="left:184px;width:49.30000000000001px;line-height:16.27px;text-align:right;">2,675</div>
<div class="c" style="left:233.3px;width:49.0px;line-height:16.27px;text-align:right;">0</div>
<div class="c" style="left:282.3px;width:94.69999999999999px;line-height:16.27px;text-align:left;">Ok</div>
</div>
<div class="rw" style="top:54.27px;height:17.27px">
<div class="c" style="left:0px;width:184px;line-height:16.27px;text-align:left;"><span class="u">HP LaserJet 6L</span></div>
<div class="c" style="left:184px;width:49.30000000000001px;line-height:16.27px;text-align:right;">2,646</div>
<div class="c" style="left:233.3px;width:49.0px;line-height:16.27px;text-align:right;">40</div>
<div class="c" style="left:282.3px;width:94.69999999999999px;line-height:16.27px;text-align:left;">Ok</div>
</div>
<div class="rw" style="top:71.54px;height:17.27px">
<div class="c" style="left:0px;width:184px;line-height:16.27px;text-align:left;"><span class="u">Canon LBP-810</span></div>
<div class="c" style="left:184px;width:49.30000000000001px;line-height:16.27px;text-align:right;">2,368</div>
<div class="c" style="left:233.3px;width:49.0px;line-height:16.27px;text-align:right;">105</div>
<div class="c" style="left:282.3px;width:94.69999999999999px;line-height:16.27px;text-align:left;">Ok</div>
</div>
<div class="rw" style="top:88.81px;height:17.27px">
<div class="c" style="left:0px;width:184px;line-height:16.27px;text-align:left;"><span class="u">Samsung ML-2150</span></div>
<div class="c" style="left:184px;width:49.30000000000001px;line-height:16.27px;text-align:right;">2,102</div>
<div class="c" style="left:233.3px;width:49.0px;line-height:16.27px;text-align:right;">171</div>
<div class="c" style="left:282.3px;width:94.69999999999999px;line-height:16.27px;text-align:left;">Ok</div>
</div>
<div class="rw" style="top:106.08px;height:17.27px">
<div class="c" style="left:0px;width:184px;line-height:16.27px;text-align:left;"><span class="u">HP LaserJet 5L PCL</span></div>
<div class="c" style="left:184px;width:49.30000000000001px;line-height:16.27px;text-align:right;">1,981</div>
<div class="c" style="left:233.3px;width:49.0px;line-height:16.27px;text-align:right;">81</div>
<div class="c" style="left:282.3px;width:94.69999999999999px;line-height:16.27px;text-align:left;">Ok</div>
</div>
<div class="rw" style="top:123.35px;height:17.27px">
<div class="c" style="left:0px;width:184px;line-height:16.27px;text-align:left;"><span class="u">HP LaserJet 5L</span></div>
<div class="c" style="left:184px;width:49.30000000000001px;line-height:16.27px;text-align:right;">1,823</div>
<div class="c" style="left:233.3px;width:49.0px;line-height:16.27px;text-align:right;">94</div>
<div class="c" style="left:282.3px;width:94.69999999999999px;line-height:16.27px;text-align:left;">Ok</div>
</div>
<div class="rw" style="top:140.62px;height:17.27px">
<div class="c" style="left:0px;width:184px;line-height:16.27px;text-align:left;"><span class="u">HP LaserJet 5L PCL</span></div>
<div class="c" style="left:184px;width:49.30000000000001px;line-height:16.27px;text-align:right;">1,558</div>
<div class="c" style="left:233.3px;width:49.0px;line-height:16.27px;text-align:right;">30</div>
<div class="c" style="left:282.3px;width:94.69999999999999px;line-height:16.27px;text-align:left;">Ok</div>
</div>
<div class="rw" style="top:157.89px;height:17.27px">
<div class="c" style="left:0px;width:184px;line-height:16.27px;text-align:left;"><span class="u">HP LaserJet 6L</span></div>
<div class="c" style="left:184px;width:49.30000000000001px;line-height:16.27px;text-align:right;">1,405</div>
<div class="c" style="left:233.3px;width:49.0px;line-height:16.27px;text-align:right;">66</div>
<div class="c" style="left:282.3px;width:94.69999999999999px;line-height:16.27px;text-align:left;">Ok</div>
</div>
<div class="pg" style="top:188px;height:20px"><svg class="a" style="left:0;top:0" width="378" height="20"><path d="M6.5 8.8 A3 3 0 0 1 11.5 6.3 M12.0 8.3 A3 3 0 0 1 7.0 10.8" stroke="#7ab0de" stroke-width="1.2" fill="none"/><path d="M10.5 4.8 L12.5 6.8 L10.0 7.3Z M7.5 12.3 L5.5 10.3 L8.0 9.8Z" fill="#7ab0de"/><path d="M110.2 7.5 V12.5" stroke="#b3d1ec" stroke-width="1.2"/><path d="M114.7 7.5 L111.7 10.0 L114.7 12.5Z" fill="#b3d1ec"/><path d="M127.5 7.5 L124.5 10.0 L127.5 12.5Z" fill="#b3d1ec"/><path d="M131.5 7.8 L129 10.0 L131.5 12.2" fill="none" stroke="#b3d1ec" stroke-width="1.1"/><path d="M138.5 3 V17" stroke="#d0e2f1"/><path d="M211.5 3 V17" stroke="#d0e2f1"/><path d="M218.5 7.5 L221.5 10.0 L218.5 12.5Z" fill="#5b9ad6"/><path d="M222.5 7.8 L225 10.0 L222.5 12.2" fill="none" stroke="#5b9ad6" stroke-width="1.1"/><path d="M233.5 7.5 L236.5 10.0 L233.5 12.5Z" fill="#5b9ad6"/><path d="M239 7.5 V12.5" stroke="#5b9ad6" stroke-width="1.2"/></svg><div class="a" style="left:141px;top:3px;line-height:12px;font-size:9.4px;letter-spacing:-0.1px">Page</div><div class="a" style="left:165px;top:2px;width:26px;height:15px;border:1px solid #a8a8a8;background:#fff;font-size:7.5px;line-height:13px;padding-left:2px;color:#000">1</div><div class="a" style="left:193.5px;top:3px;line-height:12px;font-size:9.4px;letter-spacing:-0.3px">of 3</div><div class="a" style="left:244.5px;top:2px;width:26.5px;height:15px;border:1px solid #a8a8a8;border-radius:2px;background:#fff;font-size:7.5px;line-height:13px;padding-left:3px;color:#000">8<span style="position:absolute;right:3px;top:0;font-size:8px">&#9660;</span></div><div class="a" style="right:3.7px;top:4.5px;line-height:12px;font-size:9.6px;letter-spacing:-0.25px">View 1 - 8 of 22</div></div>
</div>
<svg class="a" style="left:419px;top:494px" width="7" height="9"><path d="M1 2.5 L3.5 0.5 L6 2.5Z" fill="#b8d4ec"/><path d="M1 5 L3.5 8 L6 5Z" fill="#6ea4d6"/></svg>
<div class="pnl" style="left:581px;top:470px;width:567px;height:209px">
<div class="pt" style="padding-left:15.5px;height:19px;line-height:19px">Events</div>
<svg class="a" style="right:2px;top:4px" width="11" height="11"><circle cx="5" cy="5" r="4.8" fill="#eef5fb"/><path d="M2.5 5.8 L5 3.2 L7.5 5.8 Z" fill="#6fa8dc"/><path d="M2.6 7 H7.4" stroke="#b8d4ec" stroke-width="0.8"/></svg>
<svg class="a" style="left:4.5px;top:3px" width="12" height="12"><rect x="0.5" y="0.5" width="8.5" height="9.5" fill="#f6f6f6" stroke="#4f8a4a" stroke-width="0.8"/><rect x="1.2" y="1.2" width="2" height="8" fill="#d8d8d8"/><path d="M7.8 5 L11.5 11.3 L4.1 11.3 Z" fill="#f0d020" stroke="#b89a10" stroke-width="0.5"/><rect x="7.3" y="7.6" width="1" height="2.2" fill="#6a5a10"/></svg>
<div class="ph" style="top:19px">
<div class="hc" style="left:0px;width:143px;">Time</div>
<div class="hc" style="left:143px;width:423px;">Event</div>
</div>
<div class="rw" style="top:37.00px;height:17.27px">
<div class="c" style="left:0px;width:143px;line-height:16.27px;text-align:center;">22:43:08</div>
<div class="c" style="left:143px;width:423px;line-height:16.27px;text-align:left;">Computer added \\dep3_comp40</div>
</div>
<div class="rw" style="top:54.27px;height:17.27px">
<div class="c" style="left:0px;width:143px;line-height:16.27px;text-align:center;">22:43:03</div>
<div class="c" style="left:143px;width:423px;line-height:16.27px;text-align:left;">Printer added \\Lexmark C544DN</div>
</div>
<div class="rw" style="top:71.54px;height:17.27px">
<div class="c" style="left:0px;width:143px;line-height:16.27px;text-align:center;">22:43:01</div>
<div class="c" style="left:143px;width:423px;line-height:16.27px;text-align:left;">Printer added \\Kyocera FS-C5150DN</div>
</div>
<div class="rw" style="top:88.81px;height:17.27px">
<div class="c" style="left:0px;width:143px;line-height:16.27px;text-align:center;">22:42:58</div>
<div class="c" style="left:143px;width:423px;line-height:16.27px;text-align:left;">Printer added \\Konica Minolta 3730DN</div>
</div>
<div class="rw" style="top:106.08px;height:17.27px">
<div class="c" style="left:0px;width:143px;line-height:16.27px;text-align:center;">22:42:56</div>
<div class="c" style="left:143px;width:423px;line-height:16.27px;text-align:left;">Printer added \\Brother HL-4150Cdn</div>
</div>
<div class="rw" style="top:123.35px;height:17.27px">
<div class="c" style="left:0px;width:143px;line-height:16.27px;text-align:center;">22:41:27</div>
<div class="c" style="left:143px;width:423px;line-height:16.27px;text-align:left;">User added dep2_steve1</div>
</div>
<div class="rw" style="top:140.62px;height:17.27px">
<div class="c" style="left:0px;width:143px;line-height:16.27px;text-align:center;">22:41:27</div>
<div class="c" style="left:143px;width:423px;line-height:16.27px;text-align:left;">Computer added \\dep2_comp31</div>
</div>
<div class="rw" style="top:157.89px;height:17.27px">
<div class="c" style="left:0px;width:143px;line-height:16.27px;text-align:center;">22:41:26</div>
<div class="c" style="left:143px;width:423px;line-height:16.27px;text-align:left;">Wrong login or password WIN7</div>
</div>
<div class="pg" style="top:188px;height:20px"><svg class="a" style="left:0;top:0" width="567" height="20"><circle cx="9.0" cy="7.8" r="2.3" fill="none" stroke="#5f9bd3" stroke-width="1.3"/><path d="M7.5 9.3 L4.5 12.3" stroke="#5f9bd3" stroke-width="1.6"/><path d="M22.2 8.8 A3 3 0 0 1 27.2 6.3 M27.7 8.3 A3 3 0 0 1 22.7 10.8" stroke="#7ab0de" stroke-width="1.2" fill="none"/><path d="M26.2 4.8 L28.2 6.8 L25.7 7.3Z M23.2 12.3 L21.2 10.3 L23.7 9.8Z" fill="#7ab0de"/><rect x="38.4" y="4.8" width="6" height="7" fill="#5f9bd3"/><rect x="39.699999999999996" y="5.6" width="3.4" height="2" fill="#e8f2fb"/><rect x="39.9" y="9.3" width="3" height="2.5" fill="#e8f2fb"/><rect x="56.099999999999994" y="4.8" width="4" height="3" fill="none" stroke="#5f9bd3" stroke-width="0.9"/><rect x="54.599999999999994" y="7.8" width="7" height="3.5" rx="1" fill="#5f9bd3"/><rect x="56.099999999999994" y="10.3" width="4" height="2" fill="#e8f2fb" stroke="#5f9bd3" stroke-width="0.6"/><path d="M199.5 7.5 V12.5" stroke="#b3d1ec" stroke-width="1.2"/><path d="M204 7.5 L201 10.0 L204 12.5Z" fill="#b3d1ec"/><path d="M217.2 7.5 L214.2 10.0 L217.2 12.5Z" fill="#b3d1ec"/><path d="M221.2 7.8 L218.7 10.0 L221.2 12.2" fill="none" stroke="#b3d1ec" stroke-width="1.1"/><path d="M227.5 3 V17" stroke="#d0e2f1"/><path d="M311.5 3 V17" stroke="#d0e2f1"/><path d="M317.5 7.5 L320.5 10.0 L317.5 12.5Z" fill="#5b9ad6"/><path d="M321.5 7.8 L324 10.0 L321.5 12.2" fill="none" stroke="#5b9ad6" stroke-width="1.1"/><path d="M332.5 7.5 L335.5 10.0 L332.5 12.5Z" fill="#5b9ad6"/><path d="M338 7.5 V12.5" stroke="#5b9ad6" stroke-width="1.2"/></svg><div class="a" style="left:230.8px;top:3px;line-height:12px;font-size:9.4px;letter-spacing:-0.1px">Page</div><div class="a" style="left:254px;top:2px;width:26px;height:15px;border:1px solid #5b9ad6;background:#fff;font-size:7.5px;line-height:13px;padding-left:2px;color:#000">302</div><div class="a" style="left:283.2px;top:3px;line-height:12px;font-size:9.4px;letter-spacing:-0.3px">of 303</div><div class="a" style="left:344.8px;top:2px;width:26.5px;height:15px;border:1px solid #a8a8a8;border-radius:2px;background:#fff;font-size:7.5px;line-height:13px;padding-left:3px;color:#000">8<span style="position:absolute;right:3px;top:0;font-size:8px">&#9660;</span></div><div class="a" style="right:4px;top:4.5px;line-height:12px;font-size:9.6px;letter-spacing:-0.25px">View 2,409 - 2,416 of 2,422</div></div>
</div>
<svg class="a" style="left:665px;top:494.5px" width="7" height="9"><path d="M1 3 L3.5 0.5 L6 3Z" fill="#b8d4ec"/><path d="M1 5 L3.5 8 L6 5Z" fill="#6ea4d6"/></svg>
<div class="pnl" style="left:192px;top:714px;width:948px;height:229px">
<div class="pt" style="padding-left:2.5px;height:18px;line-height:18px">Print log - 12.01.2015</div>
<svg class="a" style="right:2px;top:4px" width="11" height="11"><circle cx="5" cy="5" r="4.8" fill="#eef5fb"/><path d="M2.5 5.8 L5 3.2 L7.5 5.8 Z" fill="#6fa8dc"/><path d="M2.6 7 H7.4" stroke="#b8d4ec" stroke-width="0.8"/></svg>
<div class="ph" style="top:18px">
<div class="hc" style="left:0px;width:63px;">Time</div>
<div class="hc" style="left:63px;width:92.5px;">User</div>
<div class="hc" style="left:155.5px;width:92.10000000000002px;">Computer</div>
<div class="hc" style="left:247.60000000000002px;width:92.39999999999998px;">Printer</div>
<div class="hc" style="left:340px;width:92.20000000000005px;">Server</div>
<div class="hc" style="left:432.20000000000005px;width:63.299999999999955px;">Paper</div>
<div class="hc" style="left:495.5px;width:40.5px;">Printed</div>
<div class="hc" style="left:536px;width:40.299999999999955px;text-align:left;padding-left:2px;">Rejected</div>
<div class="hc" style="left:576.3px;width:40.0px;">Cost</div>
<div class="hc" style="left:616.3px;width:107.95000000000005px;">Document</div>
<div class="hc" style="left:724.25px;width:47.950000000000045px;">Color</div>
<div class="hc" style="left:772.2px;width:47.799999999999955px;">Duplex</div>
<div class="hc" style="left:820px;width:48px;">Size</div>
<div class="hc" style="left:868px;width:79px;">Result</div>
</div>
<div class="rw" style="top:36.00px;height:17.2px">
<div class="c" style="left:0px;width:63px;line-height:16.20px;text-align:center;">21:00:00</div>
<div class="c" style="left:63px;width:92.5px;line-height:16.20px;text-align:left;"><span class="u">dep2_david7</span></div>
<div class="c" style="left:155.5px;width:92.10000000000002px;line-height:16.20px;text-align:left;"><span class="u">\\DEP2_COMP51</span></div>
<div class="c" style="left:247.60000000000002px;width:92.39999999999998px;line-height:16.20px;text-align:left;"><span class="u">HP LaserJet 5L PCL</span></div>
<div class="c" style="left:340px;width:92.20000000000005px;line-height:16.20px;text-align:left;"><span class="u">\\PRINTSERVER2</span></div>
<div class="c" style="left:432.20000000000005px;width:63.299999999999955px;line-height:16.20px;text-align:left;">C5 Envelope</div>
<div class="c" style="left:495.5px;width:40.5px;line-height:16.20px;text-align:right;">94</div>
<div class="c" style="left:536px;width:40.299999999999955px;line-height:16.20px;text-align:right;">0</div>
<div class="c" style="left:576.3px;width:40.0px;line-height:16.20px;text-align:right;">4.70</div>
<div class="c" style="left:616.3px;width:107.95000000000005px;line-height:16.20px;text-align:left;"><svg style="display:inline-block;vertical-align:-1px;margin-right:1.5px" width="9" height="10"><rect x="0.5" y="0.5" width="5.5" height="7" fill="#f4f4f4" stroke="#9a9a9a" stroke-width="0.8"/><rect x="2.5" y="1.8" width="5.8" height="7.5" fill="#7fb8ea" stroke="#8a9aaa" stroke-width="0.7"/><path d="M4 2.5 V9" stroke="#dff0ff" stroke-width="0.9"/></svg>symposia hulk O&#39;Hare swallow</div>
<div class="c" style="left:724.25px;width:47.950000000000045px;line-height:16.20px;text-align:center;">No</div>
<div class="c" style="left:772.2px;width:47.799999999999955px;line-height:16.20px;text-align:center;">No</div>
<div class="c" style="left:820px;width:48px;line-height:16.20px;text-align:right;">20.13</div>
<div class="c" style="left:868px;width:79px;line-height:16.20px;text-align:left;">OK</div>
</div>
<div class="rw" style="top:53.20px;height:17.2px">
<div class="c" style="left:0px;width:63px;line-height:16.20px;text-align:center;">20:58:00</div>
<div class="c" style="left:63px;width:92.5px;line-height:16.20px;text-align:left;"><span class="u">dep3_dan7</span></div>
<div class="c" style="left:155.5px;width:92.10000000000002px;line-height:16.20px;text-align:left;"><span class="u">\\DEP3_COMP46</span></div>
<div class="c" style="left:247.60000000000002px;width:92.39999999999998px;line-height:16.20px;text-align:left;"><span class="u">Canon LBP-810</span></div>
<div class="c" style="left:340px;width:92.20000000000005px;line-height:16.20px;text-align:left;"><span class="u">\\PRINTSERVER2</span></div>
<div class="c" style="left:432.20000000000005px;width:63.299999999999955px;line-height:16.20px;text-align:left;">Monarch Envelope</div>
<div class="c" style="left:495.5px;width:40.5px;line-height:16.20px;text-align:right;">0</div>
<div class="c" style="left:536px;width:40.299999999999955px;line-height:16.20px;text-align:right;">80</div>
<div class="c" style="left:576.3px;width:40.0px;line-height:16.20px;text-align:right;">1.60</div>
<div class="c" style="left:616.3px;width:107.95000000000005px;line-height:16.20px;text-align:left;"><svg style="display:inline-block;vertical-align:-1px;margin-right:1.5px" width="9" height="10"><rect x="0.5" y="0.5" width="5.5" height="7" fill="#f4f4f4" stroke="#9a9a9a" stroke-width="0.8"/><rect x="2.5" y="1.8" width="5.8" height="7.5" fill="#7fb8ea" stroke="#8a9aaa" stroke-width="0.7"/><path d="M4 2.5 V9" stroke="#dff0ff" stroke-width="0.9"/></svg>Monongahela inter jovial</div>
<div class="c" style="left:724.25px;width:47.950000000000045px;line-height:16.20px;text-align:center;">No</div>
<div class="c" style="left:772.2px;width:47.799999999999955px;line-height:16.20px;text-align:center;">No</div>
<div class="c" style="left:820px;width:48px;line-height:16.20px;text-align:right;">18.25</div>
<div class="c" style="left:868px;width:79px;line-height:16.20px;text-align:left;">QUOTA_USER</div>
</div>
<div class="rw" style="top:70.40px;height:17.2px">
<div class="c" style="left:0px;width:63px;line-height:16.20px;text-align:center;">20:56:00</div>
<div class="c" style="left:63px;width:92.5px;line-height:16.20px;text-align:left;"><span class="u">dep2_steve1</span></div>
<div class="c" style="left:155.5px;width:92.10000000000002px;line-height:16.20px;text-align:left;"><span class="u">\\DEP2_COMP1</span></div>
<div class="c" style="left:247.60000000000002px;width:92.39999999999998px;line-height:16.20px;text-align:left;"><span class="u">HP LaserJet 5L PCL</span></div>
<div class="c" style="left:340px;width:92.20000000000005px;line-height:16.20px;text-align:left;"><span class="u">\\PRINTSERVER1</span></div>
<div class="c" style="left:432.20000000000005px;width:63.299999999999955px;line-height:16.20px;text-align:left;">Unknown</div>
<div class="c" style="left:495.5px;width:40.5px;line-height:16.20px;text-align:right;">48</div>
<div class="c" style="left:536px;width:40.299999999999955px;line-height:16.20px;text-align:right;">0</div>
<div class="c" style="left:576.3px;width:40.0px;line-height:16.20px;text-align:right;">3.84</div>
<div class="c" style="left:616.3px;width:107.95000000000005px;line-height:16.20px;text-align:left;"><svg style="display:inline-block;vertical-align:-1px;margin-right:1.5px" width="9" height="10"><rect x="0.5" y="0.5" width="5.5" height="7" fill="#f4f4f4" stroke="#9a9a9a" stroke-width="0.8"/><rect x="2.5" y="1.8" width="5.8" height="7.5" fill="#7fb8ea" stroke="#8a9aaa" stroke-width="0.7"/><path d="M4 2.5 V9" stroke="#dff0ff" stroke-width="0.9"/></svg>animal congestion Vaduz</div>
<div class="c" style="left:724.25px;width:47.950000000000045px;line-height:16.20px;text-align:center;">No</div>
<div class="c" style="left:772.2px;width:47.799999999999955px;line-height:16.20px;text-align:center;">No</div>
<div class="c" style="left:820px;width:48px;line-height:16.20px;text-align:right;">10.00</div>
<div class="c" style="left:868px;width:79px;line-height:16.20px;text-align:left;">OK</div>
</div>
<div class="rw" style="top:87.60px;height:17.2px">
<div class="c" style="left:0px;width:63px;line-height:16.20px;text-align:center;">20:54:00</div>
<div class="c" style="left:63px;width:92.5px;line-height:16.20px;text-align:left;"><span class="u">dep2_alex2</span></div>
<div class="c" style="left:155.5px;width:92.10000000000002px;line-height:16.20px;text-align:left;"><span class="u">\\DEP2_COMP47</span></div>
<div class="c" style="left:247.60000000000002px;width:92.39999999999998px;line-height:16.20px;text-align:left;"><span class="u">Samsung ML-2150</span></div>
<div class="c" style="left:340px;width:92.20000000000005px;line-height:16.20px;text-align:left;"><span class="u">\\PRINTSERVER1</span></div>
<div class="c" style="left:432.20000000000005px;width:63.299999999999955px;line-height:16.20px;text-align:left;">Italy Envelope</div>
<div class="c" style="left:495.5px;width:40.5px;line-height:16.20px;text-align:right;">90</div>
<div class="c" style="left:536px;width:40.299999999999955px;line-height:16.20px;text-align:right;">0</div>
<div class="c" style="left:576.3px;width:40.0px;line-height:16.20px;text-align:right;">2.70</div>
<div class="c" style="left:616.3px;width:107.95000000000005px;line-height:16.20px;text-align:left;"><svg style="display:inline-block;vertical-align:-1px;margin-right:1.5px" width="9" height="10"><rect x="0.5" y="0.5" width="5.5" height="7" fill="#f4f4f4" stroke="#9a9a9a" stroke-width="0.8"/><rect x="2.5" y="1.8" width="5.8" height="7.5" fill="#7fb8ea" stroke="#8a9aaa" stroke-width="0.7"/><path d="M4 2.5 V9" stroke="#dff0ff" stroke-width="0.9"/></svg>tribal apron constrict rifle</div>
<div class="c" style="left:724.25px;width:47.950000000000045px;line-height:16.20px;text-align:center;">No</div>
<div class="c" style="left:772.2px;width:47.799999999999955px;line-height:16.20px;text-align:center;">No</div>
<div class="c" style="left:820px;width:48px;line-height:16.20px;text-align:right;">5.31</div>
<div class="c" style="left:868px;width:79px;line-height:16.20px;text-align:left;">OK</div>
</div>
<div class="rw" style="top:104.80px;height:17.2px">
<div class="c" style="left:0px;width:63px;line-height:16.20px;text-align:center;">20:52:00</div>
<div class="c" style="left:63px;width:92.5px;line-height:16.20px;text-align:left;"><span class="u">dep2_alice2</span></div>
<div class="c" style="left:155.5px;width:92.10000000000002px;line-height:16.20px;text-align:left;"><span class="u">\\DEP2_COMP11</span></div>
<div class="c" style="left:247.60000000000002px;width:92.39999999999998px;line-height:16.20px;text-align:left;"><span class="u">HP LaserJet 5L PCL</span></div>
<div class="c" style="left:340px;width:92.20000000000005px;line-height:16.20px;text-align:left;"><span class="u">\\PRINTSERVER1</span></div>
<div class="c" style="left:432.20000000000005px;width:63.299999999999955px;line-height:16.20px;text-align:left;">Executive</div>
<div class="c" style="left:495.5px;width:40.5px;line-height:16.20px;text-align:right;">96</div>
<div class="c" style="left:536px;width:40.299999999999955px;line-height:16.20px;text-align:right;">0</div>
<div class="c" style="left:576.3px;width:40.0px;line-height:16.20px;text-align:right;">5.76</div>
<div class="c" style="left:616.3px;width:107.95000000000005px;line-height:16.20px;text-align:left;"><svg style="display:inline-block;vertical-align:-1px;margin-right:1.5px" width="9" height="10"><rect x="0.5" y="0.5" width="5.5" height="7" fill="#f4f4f4" stroke="#9a9a9a" stroke-width="0.8"/><rect x="2.5" y="1.8" width="5.8" height="7.5" fill="#7fb8ea" stroke="#8a9aaa" stroke-width="0.7"/><path d="M4 2.5 V9" stroke="#dff0ff" stroke-width="0.9"/></svg>Wilshire intricacy octal</div>
<div class="c" style="left:724.25px;width:47.950000000000045px;line-height:16.20px;text-align:center;">No</div>
<div class="c" style="left:772.2px;width:47.799999999999955px;line-height:16.20px;text-align:center;">No</div>
<div class="c" style="left:820px;width:48px;line-height:16.20px;text-align:right;">5.69</div>
<div class="c" style="left:868px;width:79px;line-height:16.20px;text-align:left;">OK</div>
</div>
<div class="rw" style="top:122.00px;height:17.2px">
<div class="c" style="left:0px;width:63px;line-height:16.20px;text-align:center;">20:50:00</div>
<div class="c" style="left:63px;width:92.5px;line-height:16.20px;text-align:left;"><span class="u">dep2_jerry8</span></div>
<div class="c" style="left:155.5px;width:92.10000000000002px;line-height:16.20px;text-align:left;"><span class="u">\\DEP2_COMP22</span></div>
<div class="c" style="left:247.60000000000002px;width:92.39999999999998px;line-height:16.20px;text-align:left;"><span class="u">Samsung ML-2150</span></div>
<div class="c" style="left:340px;width:92.20000000000005px;line-height:16.20px;text-align:left;"><span class="u">\\PRINTSERVER1</span></div>
<div class="c" style="left:432.20000000000005px;width:63.299999999999955px;line-height:16.20px;text-align:left;">Tabloid</div>
<div class="c" style="left:495.5px;width:40.5px;line-height:16.20px;text-align:right;">24</div>
<div class="c" style="left:536px;width:40.299999999999955px;line-height:16.20px;text-align:right;">0</div>
<div class="c" style="left:576.3px;width:40.0px;line-height:16.20px;text-align:right;">3.60</div>
<div class="c" style="left:616.3px;width:107.95000000000005px;line-height:16.20px;text-align:left;"><svg style="display:inline-block;vertical-align:-1px;margin-right:1.5px" width="9" height="10"><rect x="0.5" y="0.5" width="5.5" height="7" fill="#f4f4f4" stroke="#9a9a9a" stroke-width="0.8"/><rect x="2.5" y="1.8" width="5.8" height="7.5" fill="#7fb8ea" stroke="#8a9aaa" stroke-width="0.7"/><path d="M4 2.5 V9" stroke="#dff0ff" stroke-width="0.9"/></svg>heckle Alamo grilled fish</div>
<div class="c" style="left:724.25px;width:47.950000000000045px;line-height:16.20px;text-align:center;">No</div>
<div class="c" style="left:772.2px;width:47.799999999999955px;line-height:16.20px;text-align:center;">No</div>
<div class="c" style="left:820px;width:48px;line-height:16.20px;text-align:right;">3.56</div>
<div class="c" style="left:868px;width:79px;line-height:16.20px;text-align:left;">OK</div>
</div>
<div class="rw" style="top:139.20px;height:17.2px">
<div class="c" style="left:0px;width:63px;line-height:16.20px;text-align:center;">20:48:00</div>
<div class="c" style="left:63px;width:92.5px;line-height:16.20px;text-align:left;"><span class="u">dep2_bill4</span></div>
<div class="c" style="left:155.5px;width:92.10000000000002px;line-height:16.20px;text-align:left;"><span class="u">\\DEP2_COMP17</span></div>
<div class="c" style="left:247.60000000000002px;width:92.39999999999998px;line-height:16.20px;text-align:left;"><span class="u">HP LaserJet 5L PCL</span></div>
<div class="c" style="left:340px;width:92.20000000000005px;line-height:16.20px;text-align:left;"><span class="u">\\PRINTSERVER2</span></div>
<div class="c" style="left:432.20000000000005px;width:63.299999999999955px;line-height:16.20px;text-align:left;">Unknown</div>
<div class="c" style="left:495.5px;width:40.5px;line-height:16.20px;text-align:right;">13</div>
<div class="c" style="left:536px;width:40.299999999999955px;line-height:16.20px;text-align:right;">0</div>
<div class="c" style="left:576.3px;width:40.0px;line-height:16.20px;text-align:right;">0.00</div>
<div class="c" style="left:616.3px;width:107.95000000000005px;line-height:16.20px;text-align:left;"><svg style="display:inline-block;vertical-align:-1px;margin-right:1.5px" width="9" height="10"><rect x="0.5" y="0.5" width="5.5" height="7" fill="#f4f4f4" stroke="#9a9a9a" stroke-width="0.8"/><rect x="2.5" y="1.8" width="5.8" height="7.5" fill="#7fb8ea" stroke="#8a9aaa" stroke-width="0.7"/><path d="M4 2.5 V9" stroke="#dff0ff" stroke-width="0.9"/></svg>footbridge shirk humid</div>
<div class="c" style="left:724.25px;width:47.950000000000045px;line-height:16.20px;text-align:center;">No</div>
<div class="c" style="left:772.2px;width:47.799999999999955px;line-height:16.20px;text-align:center;">No</div>
<div class="c" style="left:820px;width:48px;line-height:16.20px;text-align:right;">2.84</div>
<div class="c" style="left:868px;width:79px;line-height:16.20px;text-align:left;">OK</div>
</div>
<div class="rw" style="top:156.40px;height:17.2px">
<div class="c" style="left:0px;width:63px;line-height:16.20px;text-align:center;">20:46:00</div>
<div class="c" style="left:63px;width:92.5px;line-height:16.20px;text-align:left;"><span class="u">dep3_admin</span></div>
<div class="c" style="left:155.5px;width:92.10000000000002px;line-height:16.20px;text-align:left;"><span class="u">\\DEP3_COMP44</span></div>
<div class="c" style="left:247.60000000000002px;width:92.39999999999998px;line-height:16.20px;text-align:left;"><span class="u">Epson Stylus 1270 ESC</span></div>
<div class="c" style="left:340px;width:92.20000000000005px;line-height:16.20px;text-align:left;"><span class="u">\\PRINTSERVER1</span></div>
<div class="c" style="left:432.20000000000005px;width:63.299999999999955px;line-height:16.20px;text-align:left;">B5 sheet</div>
<div class="c" style="left:495.5px;width:40.5px;line-height:16.20px;text-align:right;">98</div>
<div class="c" style="left:536px;width:40.299999999999955px;line-height:16.20px;text-align:right;">0</div>
<div class="c" style="left:576.3px;width:40.0px;line-height:16.20px;text-align:right;">5.88</div>
<div class="c" style="left:616.3px;width:107.95000000000005px;line-height:16.20px;text-align:left;"><svg style="display:inline-block;vertical-align:-1px;margin-right:1.5px" width="9" height="10"><rect x="0.5" y="0.5" width="5.5" height="7" fill="#f4f4f4" stroke="#9a9a9a" stroke-width="0.8"/><rect x="2.5" y="1.8" width="5.8" height="7.5" fill="#7fb8ea" stroke="#8a9aaa" stroke-width="0.7"/><path d="M4 2.5 V9" stroke="#dff0ff" stroke-width="0.9"/></svg>Liggett Boyd tally fails</div>
<div class="c" style="left:724.25px;width:47.950000000000045px;line-height:16.20px;text-align:center;">No</div>
<div class="c" style="left:772.2px;width:47.799999999999955px;line-height:16.20px;text-align:center;">No</div>
<div class="c" style="left:820px;width:48px;line-height:16.20px;text-align:right;">22.50</div>
<div class="c" style="left:868px;width:79px;line-height:16.20px;text-align:left;">OK</div>
</div>
<div class="rw" style="top:173.60px;height:17.2px">
<div class="c" style="left:0px;width:63px;line-height:16.20px;text-align:center;">20:44:00</div>
<div class="c" style="left:63px;width:92.5px;line-height:16.20px;text-align:left;"><span class="u">dep3_sam9</span></div>
<div class="c" style="left:155.5px;width:92.10000000000002px;line-height:16.20px;text-align:left;"><span class="u">\\DEP3_COMP51</span></div>
<div class="c" style="left:247.60000000000002px;width:92.39999999999998px;line-height:16.20px;text-align:left;"><span class="u">Epson Stylus 1270 ESC</span></div>
<div class="c" style="left:340px;width:92.20000000000005px;line-height:16.20px;text-align:left;"><span class="u">\\PRINTSERVER1</span></div>
<div class="c" style="left:432.20000000000005px;width:63.299999999999955px;line-height:16.20px;text-align:left;">6 3/4 Envelope</div>
<div class="c" style="left:495.5px;width:40.5px;line-height:16.20px;text-align:right;">25</div>
<div class="c" style="left:536px;width:40.299999999999955px;line-height:16.20px;text-align:right;">0</div>
<div class="c" style="left:576.3px;width:40.0px;line-height:16.20px;text-align:right;">0.50</div>
<div class="c" style="left:616.3px;width:107.95000000000005px;line-height:16.20px;text-align:left;"><svg style="display:inline-block;vertical-align:-1px;margin-right:1.5px" width="9" height="10"><rect x="0.5" y="0.5" width="5.5" height="7" fill="#f4f4f4" stroke="#9a9a9a" stroke-width="0.8"/><rect x="2.5" y="1.8" width="5.8" height="7.5" fill="#7fb8ea" stroke="#8a9aaa" stroke-width="0.7"/><path d="M4 2.5 V9" stroke="#dff0ff" stroke-width="0.9"/></svg>lignum apprehension pure</div>
<div class="c" style="left:724.25px;width:47.950000000000045px;line-height:16.20px;text-align:center;">No</div>
<div class="c" style="left:772.2px;width:47.799999999999955px;line-height:16.20px;text-align:center;">No</div>
<div class="c" style="left:820px;width:48px;line-height:16.20px;text-align:right;">1.38</div>
<div class="c" style="left:868px;width:79px;line-height:16.20px;text-align:left;">OK</div>
</div>
<div class="rw" style="top:190.80px;height:17.2px">
<div class="c" style="left:0px;width:63px;line-height:16.20px;text-align:center;">20:42:00</div>
<div class="c" style="left:63px;width:92.5px;line-height:16.20px;text-align:left;"><span class="u">dep2_michael3</span></div>
<div class="c" style="left:155.5px;width:92.10000000000002px;line-height:16.20px;text-align:left;"><span class="u">\\DEP2_COMP45</span></div>
<div class="c" style="left:247.60000000000002px;width:92.39999999999998px;line-height:16.20px;text-align:left;"><span class="u">HP LaserJet 5L PCL</span></div>
<div class="c" style="left:340px;width:92.20000000000005px;line-height:16.20px;text-align:left;"><span class="u">\\PRINTSERVER2</span></div>
<div class="c" style="left:432.20000000000005px;width:63.299999999999955px;line-height:16.20px;text-align:left;">A4 small sheet</div>
<div class="c" style="left:495.5px;width:40.5px;line-height:16.20px;text-align:right;">68</div>
<div class="c" style="left:536px;width:40.299999999999955px;line-height:16.20px;text-align:right;">0</div>
<div class="c" style="left:576.3px;width:40.0px;line-height:16.20px;text-align:right;">5.44</div>
<div class="c" style="left:616.3px;width:107.95000000000005px;line-height:16.20px;text-align:left;"><svg style="display:inline-block;vertical-align:-1px;margin-right:1.5px" width="9" height="10"><rect x="0.5" y="0.5" width="5.5" height="7" fill="#f4f4f4" stroke="#9a9a9a" stroke-width="0.8"/><rect x="2.5" y="1.8" width="5.8" height="7.5" fill="#7fb8ea" stroke="#8a9aaa" stroke-width="0.7"/><path d="M4 2.5 V9" stroke="#dff0ff" stroke-width="0.9"/></svg>controllable soma swap</div>
<div class="c" style="left:724.25px;width:47.950000000000045px;line-height:16.20px;text-align:center;">No</div>
<div class="c" style="left:772.2px;width:47.799999999999955px;line-height:16.20px;text-align:center;">No</div>
<div class="c" style="left:820px;width:48px;line-height:16.20px;text-align:right;">15.25</div>
<div class="c" style="left:868px;width:79px;line-height:16.20px;text-align:left;">OK</div>
</div>
<div class="pg" style="top:208.2px;height:20px"><svg class="a" style="left:0;top:0" width="948" height="20"><circle cx="10.0" cy="7.8" r="2.3" fill="none" stroke="#5f9bd3" stroke-width="1.3"/><path d="M8.5 9.3 L5.5 12.3" stroke="#5f9bd3" stroke-width="1.6"/><path d="M23.2 8.8 A3 3 0 0 1 28.2 6.3 M28.7 8.3 A3 3 0 0 1 23.7 10.8" stroke="#7ab0de" stroke-width="1.2" fill="none"/><path d="M27.2 4.8 L29.2 6.8 L26.7 7.3Z M24.2 12.3 L22.2 10.3 L24.7 9.8Z" fill="#7ab0de"/><rect x="39.4" y="4.8" width="6" height="7" fill="#5f9bd3"/><rect x="40.699999999999996" y="5.6" width="3.4" height="2" fill="#e8f2fb"/><rect x="40.9" y="9.3" width="3" height="2.5" fill="#e8f2fb"/><rect x="57.099999999999994" y="4.8" width="4" height="3" fill="none" stroke="#5f9bd3" stroke-width="0.9"/><rect x="55.599999999999994" y="7.8" width="7" height="3.5" rx="1" fill="#5f9bd3"/><rect x="57.099999999999994" y="10.3" width="4" height="2" fill="#e8f2fb" stroke="#5f9bd3" stroke-width="0.6"/><path d="M392.4 7.5 V12.5" stroke="#b3d1ec" stroke-width="1.2"/><path d="M396.9 7.5 L393.9 10.0 L396.9 12.5Z" fill="#b3d1ec"/><path d="M409.7 7.5 L406.7 10.0 L409.7 12.5Z" fill="#b3d1ec"/><path d="M413.7 7.8 L411.2 10.0 L413.7 12.2" fill="none" stroke="#b3d1ec" stroke-width="1.1"/><path d="M419.5 3 V17" stroke="#d0e2f1"/><path d="M499.5 3 V17" stroke="#d0e2f1"/><path d="M504.8 7.5 L507.8 10.0 L504.8 12.5Z" fill="#5b9ad6"/><path d="M508.8 7.8 L511.3 10.0 L508.8 12.2" fill="none" stroke="#5b9ad6" stroke-width="1.1"/><path d="M520.7 7.5 L523.7 10.0 L520.7 12.5Z" fill="#5b9ad6"/><path d="M526.2 7.5 V12.5" stroke="#5b9ad6" stroke-width="1.2"/></svg><div class="a" style="left:423.2px;top:3px;line-height:12px;font-size:9.4px;letter-spacing:-0.1px">Page</div><div class="a" style="left:447.2px;top:2px;width:26px;height:15px;border:1px solid #a8a8a8;background:#fff;font-size:7.5px;line-height:13px;padding-left:2px;color:#000">1</div><div class="a" style="left:475.6px;top:3px;line-height:12px;font-size:9.4px;letter-spacing:-0.3px">of 51</div><div class="a" style="left:532.4px;top:2px;width:26.5px;height:15px;border:1px solid #a8a8a8;border-radius:2px;background:#fff;font-size:7.5px;line-height:13px;padding-left:3px;color:#000">10<span style="position:absolute;right:3px;top:0;font-size:8px">&#9660;</span></div><div class="a" style="right:5px;top:4.5px;line-height:12px;font-size:9.6px;letter-spacing:-0.25px">View 1 - 10 of 507</div></div>
</div>
<svg class="a" style="left:237px;top:737px" width="7" height="9"><path d="M1 3 L3.5 0.5 L6 3Z" fill="#b8d4ec"/><path d="M1 5 L3.5 8 L6 5Z" fill="#6ea4d6"/></svg>
<div class="hr" style="top:694px"></div>
<div class="a" style="left:0;top:970px;width:1188px;height:2px;border-top:1px solid #d4d4d4;border-bottom:1px solid #f4f4f4"></div>
<div class="a" style="left:1095px;top:981.3px;font-size:7.2px;color:#555;letter-spacing:-0.15px">OBJECTPRINT 4.3.1501</div>
</body></html>
